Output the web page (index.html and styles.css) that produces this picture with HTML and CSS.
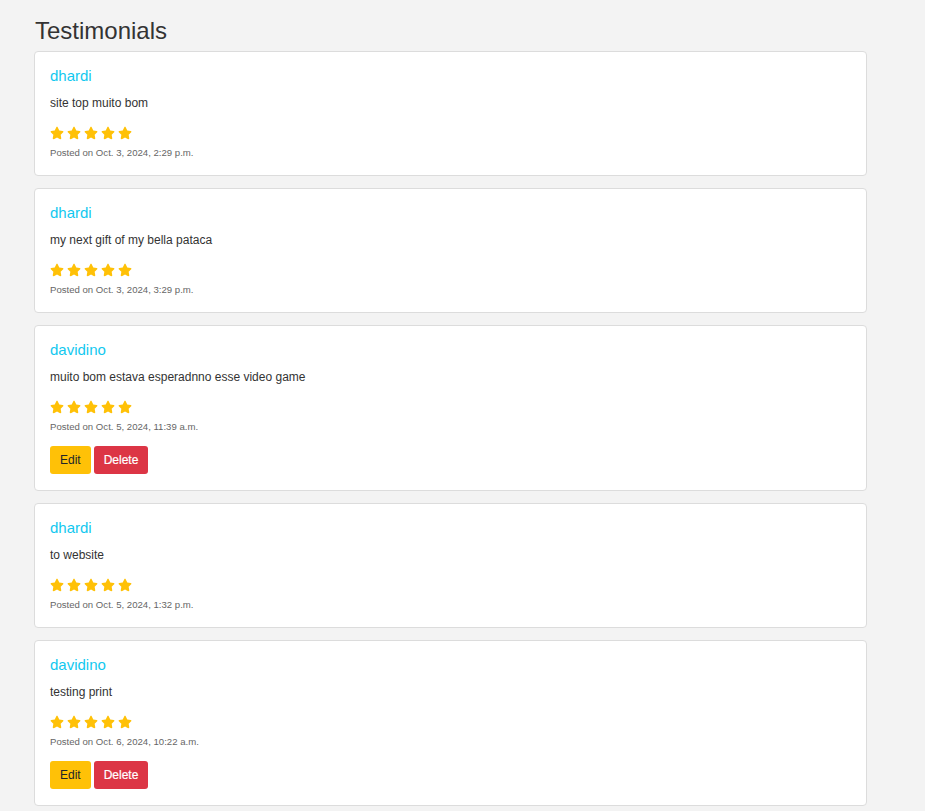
FILE: index.html
```html
<!DOCTYPE html>
<html lang="en">
<head>
<meta charset="utf-8">
<title>Testimonials</title>
<link rel="stylesheet" href="styles.css">
</head>
<body>
<svg width="0" height="0" class="defs" aria-hidden="true">
  <symbol id="star" viewBox="0 0 576 512">
    <path d="M316.9 18C311.6 7 300.4 0 288.1 0s-23.4 7-28.8 18L195 150.3 51.4 171.5c-12 1.8-22 10.2-25.7 21.7s-.7 24.2 7.900 32.7L137.8 329 113.2 474.7c-2 12 3 24.2 12.9 31.3s23 8 33.8 2.3l128.3-68.5 128.3 68.5c10.8 5.7 23.9 4.9 33.8-2.3s14.9-19.3 12.9-31.3L438.5 329 542.7 225.9c8.6-8.5 11.7-21.2 7.9-32.7s-13.7-19.9-25.7-21.7L381.2 150.3 316.9 18z"/>
  </symbol>
</svg>
<main class="container">
  <h2 class="page-title">Testimonials</h2>

  <div class="card">
    <h5 class="card-title">dhardi</h5>
    <p class="card-text">site top muito bom</p>
    <div class="stars"><svg class="star"><use href="#star"/></svg><svg class="star"><use href="#star"/></svg><svg class="star"><use href="#star"/></svg><svg class="star"><use href="#star"/></svg><svg class="star"><use href="#star"/></svg></div>
    <p class="posted">Posted on Oct. 3, 2024, 2:29 p.m.</p>
  </div>

  <div class="card">
    <h5 class="card-title">dhardi</h5>
    <p class="card-text">my next gift of my bella pataca</p>
    <div class="stars"><svg class="star"><use href="#star"/></svg><svg class="star"><use href="#star"/></svg><svg class="star"><use href="#star"/></svg><svg class="star"><use href="#star"/></svg><svg class="star"><use href="#star"/></svg></div>
    <p class="posted">Posted on Oct. 3, 2024, 3:29 p.m.</p>
  </div>

  <div class="card">
    <h5 class="card-title">davidino</h5>
    <p class="card-text">muito bom estava esperadnno esse video game</p>
    <div class="stars"><svg class="star"><use href="#star"/></svg><svg class="star"><use href="#star"/></svg><svg class="star"><use href="#star"/></svg><svg class="star"><use href="#star"/></svg><svg class="star"><use href="#star"/></svg></div>
    <p class="posted">Posted on Oct. 5, 2024, 11:39 a.m.</p>
    <div class="actions">
      <a class="btn btn-warning" href="#">Edit</a>
      <a class="btn btn-danger" href="#">Delete</a>
    </div>
  </div>

  <div class="card">
    <h5 class="card-title">dhardi</h5>
    <p class="card-text">to website</p>
    <div class="stars"><svg class="star"><use href="#star"/></svg><svg class="star"><use href="#star"/></svg><svg class="star"><use href="#star"/></svg><svg class="star"><use href="#star"/></svg><svg class="star"><use href="#star"/></svg></div>
    <p class="posted">Posted on Oct. 5, 2024, 1:32 p.m.</p>
  </div>

  <div class="card">
    <h5 class="card-title">davidino</h5>
    <p class="card-text">testing print</p>
    <div class="stars"><svg class="star"><use href="#star"/></svg><svg class="star"><use href="#star"/></svg><svg class="star"><use href="#star"/></svg><svg class="star"><use href="#star"/></svg><svg class="star"><use href="#star"/></svg></div>
    <p class="posted">Posted on Oct. 6, 2024, 10:22 a.m.</p>
    <div class="actions">
      <a class="btn btn-warning" href="#">Edit</a>
      <a class="btn btn-danger" href="#">Delete</a>
    </div>
  </div>
</main>
</body>
</html>
```

FILE: styles.css
```css
* { box-sizing: border-box; }

html, body {
  margin: 0;
  padding: 0;
  background: #f3f3f3;
  font-family: "Liberation Sans", Arial, sans-serif;
  color: #333;
}

.defs { position: absolute; width: 0; height: 0; overflow: hidden; }

.container {
  width: 833px;
  margin-left: 34px;
  padding-top: 16px;
}

.page-title {
  margin: 0 0 6px 1px;
  font-size: 24px;
  font-weight: normal;
  line-height: 29px;
  color: #333;
}

.card {
  background: #fff;
  border: 1px solid #dcdcdc;
  border-radius: 4px;
  padding: 15px 15px 16px;
  margin-bottom: 12px;
}

.card-title {
  margin: 0 0 9px;
  font-size: 15px;
  font-weight: normal;
  line-height: 18px;
  color: #12c8ef;
}

.card-text {
  margin: 0 0 14px;
  font-size: 12px;
  line-height: 18px;
  color: #333;
}

.stars {
  display: flex;
  gap: 3px;
  height: 14px;
  align-items: center;
}

.star {
  width: 14px;
  height: 14px;
  fill: #ffc107;
}

.posted {
  margin: 7px 0 0;
  font-size: 9.6px;
  line-height: 12px;
  color: #666;
}

.actions {
  display: flex;
  gap: 3px;
  margin-top: 13px;
}

.btn {
  display: inline-flex;
  align-items: center;
  height: 28px;
  padding: 0 10px;
  font-size: 12px;
  border-radius: 3px;
  text-decoration: none;
}

.btn-warning {
  background: #ffc107;
  color: #212529;
}

.btn-danger {
  background: #dc3545;
  color: #fff;
  font-weight: 500;
  -webkit-text-stroke: 0.2px #fff;
}
```
